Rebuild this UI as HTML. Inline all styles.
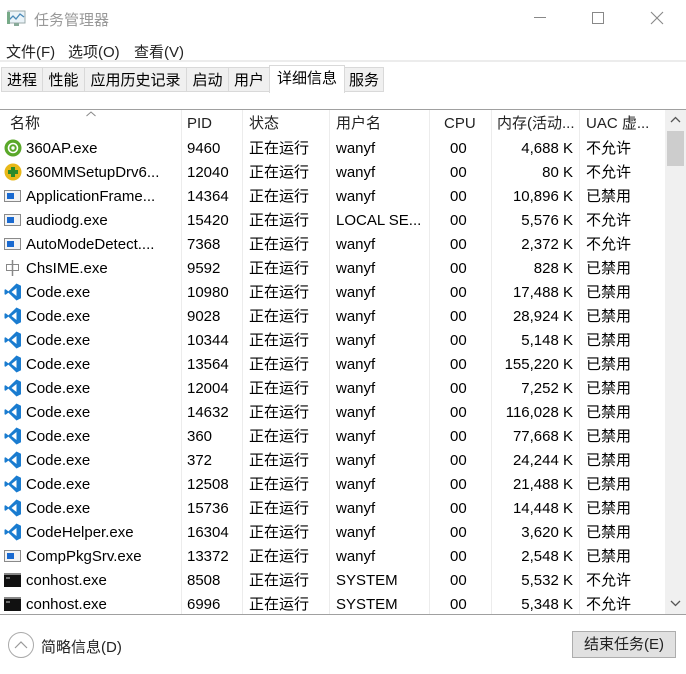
<!DOCTYPE html>
<html><head><meta charset="utf-8"><style>
*{margin:0;padding:0;box-sizing:border-box}
body{width:686px;height:674px;background:#fff;font-family:"Liberation Sans","Noto Sans CJK SC",sans-serif;font-size:15px;color:#000;position:relative;overflow:hidden}
.a{position:absolute;white-space:nowrap}
.tab{position:absolute;top:67px;height:25px;background:#f0f0f0;border:1px solid #d9d9d9;font-size:15px;line-height:25px;text-align:center}
.row{position:absolute;left:0;width:665px;height:24px;line-height:26px}
.row span{position:absolute;top:0}
.vl{position:absolute;top:110px;height:504px;width:1px;background:#ececec}
</style></head><body>
<svg class="a" style="left:7px;top:10px" width="20" height="18" viewBox="0 0 20 18"><rect x="1" y="1" width="17" height="12" fill="#eaf3f8" stroke="#9aa" /><polyline points="2,10 6,6 9,9 13,4 17,7" fill="none" stroke="#4a8ab8" stroke-width="1.3"/><rect x="7" y="13" width="5" height="3" fill="#8a9"/><rect x="0" y="2" width="3" height="12" fill="#7a8"/></svg>
<div class="a" style="left:34px;top:9px;color:#999;font-size:15px">任务管理器</div>
<div class="a" style="left:534px;top:17px;width:12px;height:1px;background:#888"></div>
<div class="a" style="left:592px;top:12px;width:12px;height:12px;border:1px solid #888"></div>
<svg class="a" style="left:650px;top:11px" width="14" height="14"><path d="M1 1L13 13M13 1L1 13" stroke="#888" stroke-width="1.1"/></svg>
<div class="a" style="left:6px;top:41px;color:#222">文件(F)</div>
<div class="a" style="left:68px;top:41px;color:#222">选项(O)</div>
<div class="a" style="left:134px;top:41px;color:#222">查看(V)</div>
<div class="a" style="left:0;top:60px;width:686px;height:2px;background:#ececec"></div>
<div class="tab" style="left:1px;width:42px">进程</div>
<div class="tab" style="left:42px;width:43px">性能</div>
<div class="tab" style="left:84px;width:103px">应用历史记录</div>
<div class="tab" style="left:186px;width:43px">启动</div>
<div class="tab" style="left:228px;width:42px">用户</div>
<div class="tab" style="left:269px;top:65px;height:28px;width:76px;background:#fff;border-bottom:none;line-height:26px">详细信息</div>
<div class="tab" style="left:344px;width:40px">服务</div>
<div class="a" style="left:0;top:109px;width:686px;height:1px;background:#a0a0a0"></div>
<div class="a" style="left:0;top:614px;width:686px;height:1px;background:#a0a0a0"></div>
<div class="vl" style="left:181px"></div><div class="vl" style="left:242px"></div><div class="vl" style="left:329px"></div><div class="vl" style="left:429px"></div><div class="vl" style="left:491px"></div><div class="vl" style="left:579px"></div>
<svg class="a" style="left:86px;top:111px" width="10" height="6"><path d="M0.5 5L5 1L9.5 5" fill="none" stroke="#888"/></svg>
<div class="row" style="top:111px;color:#222">
<span style="left:10px">名称</span><span style="left:187px">PID</span><span style="left:249px">状态</span><span style="left:336px">用户名</span><span style="left:444px">CPU</span><span style="left:497px">内存(活动...</span><span style="left:586px">UAC 虚...</span>
</div>
<div class="a" style="left:665px;top:110px;width:21px;height:504px;background:#f0f0f0"></div>
<svg class="a" style="left:670px;top:116px" width="11" height="7"><path d="M1 6L5.5 1.5L10 6" fill="none" stroke="#555" stroke-width="1.3"/></svg>
<div class="a" style="left:667px;top:131px;width:17px;height:35px;background:#cdcdcd"></div>
<svg class="a" style="left:670px;top:600px" width="11" height="7"><path d="M1 1L5.5 5.5L10 1" fill="none" stroke="#555" stroke-width="1.3"/></svg>
<div id="rows"></div>
<div class="a" style="left:8px;top:632px;width:26px;height:26px;border:1px solid #aaa;border-radius:50%"></div>
<svg class="a" style="left:14px;top:640px" width="14" height="9"><path d="M1 8L7 2L13 8" fill="none" stroke="#999" stroke-width="1.2"/></svg>
<div class="a" style="left:41px;top:636px;color:#222">简略信息(D)</div>
<div class="a" style="left:572px;top:631px;width:104px;height:27px;background:#e1e1e1;border:1px solid #adadad;text-align:center;line-height:26px;color:#222">结束任务(E)</div>
<script>
var d=[["360AP.exe","9460","wanyf","4,688 K","不允许","g"],["360MMSetupDrv6...","12040","wanyf","80 K","不允许","y"],["ApplicationFrame...","14364","wanyf","10,896 K","已禁用","w"],["audiodg.exe","15420","LOCAL SE...","5,576 K","不允许","w"],["AutoModeDetect....","7368","wanyf","2,372 K","不允许","w"],["ChsIME.exe","9592","wanyf","828 K","已禁用","c"],["Code.exe","10980","wanyf","17,488 K","已禁用","v"],["Code.exe","9028","wanyf","28,924 K","已禁用","v"],["Code.exe","10344","wanyf","5,148 K","已禁用","v"],["Code.exe","13564","wanyf","155,220 K","已禁用","v"],["Code.exe","12004","wanyf","7,252 K","已禁用","v"],["Code.exe","14632","wanyf","116,028 K","已禁用","v"],["Code.exe","360","wanyf","77,668 K","已禁用","v"],["Code.exe","372","wanyf","24,244 K","已禁用","v"],["Code.exe","12508","wanyf","21,488 K","已禁用","v"],["Code.exe","15736","wanyf","14,448 K","已禁用","v"],["CodeHelper.exe","16304","wanyf","3,620 K","已禁用","v"],["CompPkgSrv.exe","13372","wanyf","2,548 K","已禁用","w"],["conhost.exe","8508","SYSTEM","5,532 K","不允许","k"],["conhost.exe","6996","SYSTEM","5,348 K","不允许","k"]];
var ic={g:'<circle cx="9" cy="9" r="8.5" fill="#5aa82a"/><circle cx="9" cy="9" r="4.5" fill="none" stroke="#fff" stroke-width="1.6"/><circle cx="9" cy="9" r="1.7" fill="#fff"/>',
y:'<circle cx="9" cy="9" r="8.5" fill="#e8b818"/><path d="M9 4V14M4 9H14" stroke="#2a8a2a" stroke-width="4"/>',
w:'<rect x="0.5" y="3.5" width="16" height="11" fill="#f4f4f4" stroke="#8a8a8a"/><rect x="3" y="6" width="7" height="6" fill="#1a6ad0"/>',
c:'<rect x="2.5" y="5.5" width="12" height="6" fill="none" stroke="#888"/><path d="M8.5 1V17" stroke="#888" stroke-width="1.5"/>',
v:'<path d="M12.5 0.5L17 2.7V15.3L12.5 17.5L4.4 9.6L1.6 11.8L0.5 11.2V6.8L1.6 6.2L4.4 8.4L12.5 0.5Z" fill="#1a7cd0"/><path d="M12.5 5L7.5 9L12.5 13Z" fill="#fff"/>',
k:'<rect x="0" y="2" width="17" height="14" fill="#111"/><rect x="0" y="2" width="17" height="2" fill="#888"/><path d="M2 7H6" stroke="#ccc"/>'};
var h='';d.forEach(function(r,i){h+='<div class="row" style="top:'+(136+i*24)+'px"><svg style="position:absolute;left:4px;top:3px" width="18" height="18">'+ic[r[5]]+'</svg><span style="left:26px">'+r[0]+'</span><span style="left:187px">'+r[1]+'</span><span style="left:249px">正在运行</span><span style="left:336px">'+r[2]+'</span><span style="left:450px">00</span><span style="right:92px">'+r[3]+'</span><span style="left:586px">'+r[4]+'</span></div>'});
document.getElementById('rows').outerHTML=h;
</script>
</body></html>
